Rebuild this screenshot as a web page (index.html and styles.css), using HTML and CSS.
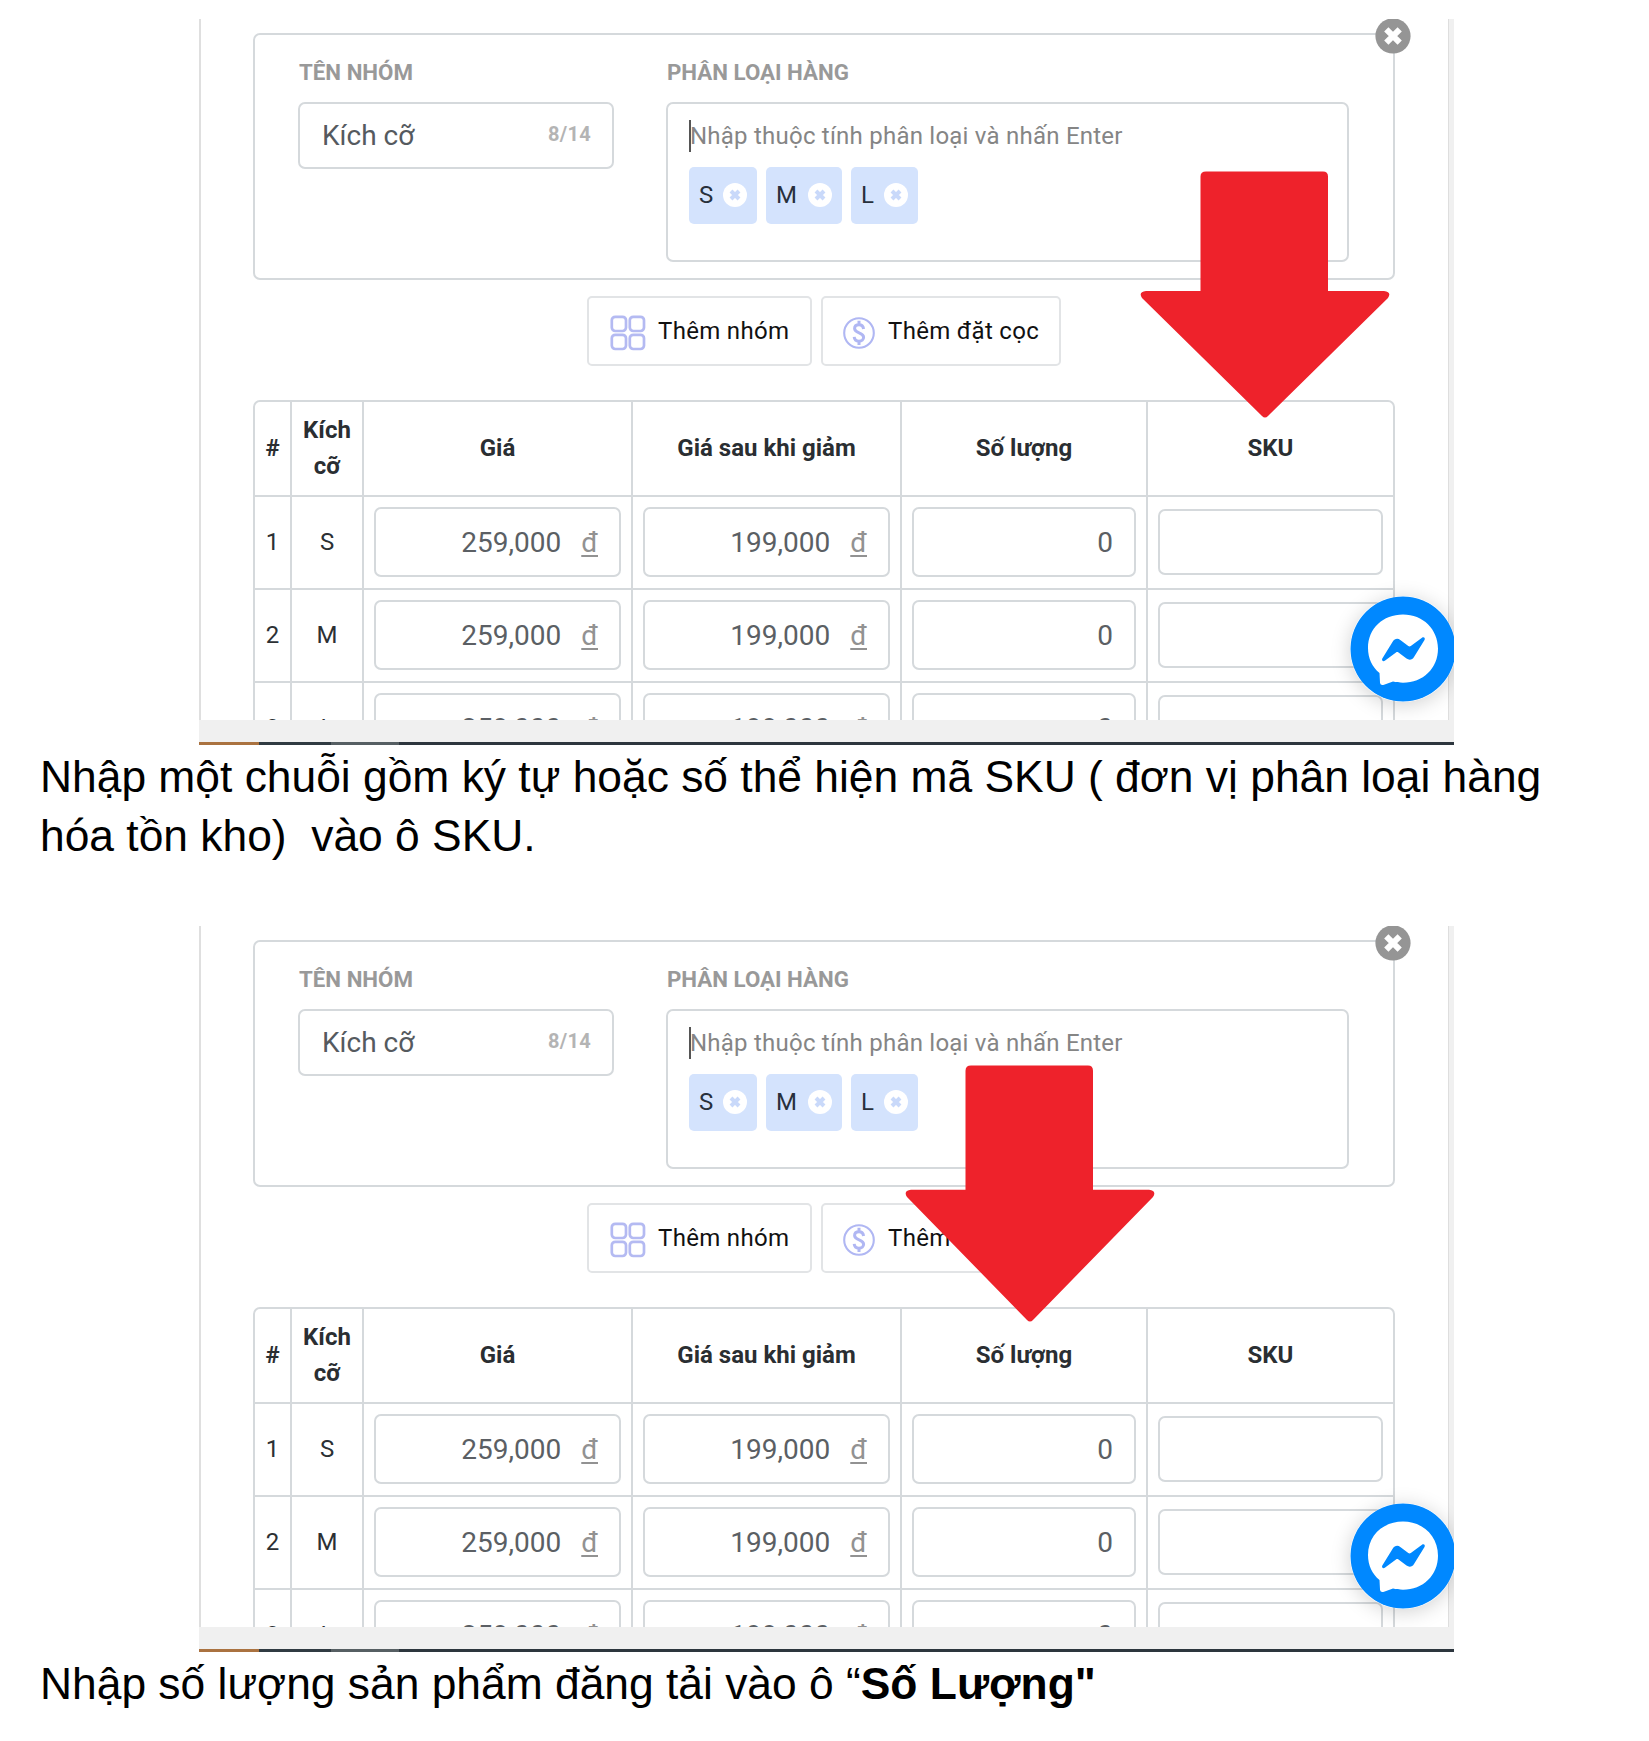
FILE: index.html
```html
<!DOCTYPE html>
<html lang="vi">
<head>
<meta charset="utf-8">
<title>Hướng dẫn đăng tải sản phẩm</title>
<link rel="stylesheet" href="styles.css">
</head>
<body>
<svg class="defs" width="0" height="0">
  <symbol id="cross" viewBox="0 0 36 36"><circle cx="18" cy="18" r="17.6" fill="currentColor"/><path class="cross-mark" d="M11.3 11.3 24.7 24.7M24.7 11.3 11.3 24.700"/></symbol>
  <symbol id="grid" viewBox="0 0 36 36"><g fill="none" stroke="#b4baf2" stroke-width="2.700"><rect x="1.800" y="1.800" width="14.200" height="14.200" rx="3.500"/><rect x="19.800" y="1.800" width="14.200" height="14.200" rx="3.500"/><rect x="1.800" y="19.800" width="14.200" height="14.200" rx="3.500"/><rect x="19.800" y="19.800" width="14.200" height="14.200" rx="3.500"/></g></symbol>
  <symbol id="coin" viewBox="0 0 32 32"><g fill="none" stroke="#b0b7f3"><circle cx="16" cy="16" r="14.800" stroke-width="2.100"/><path stroke-width="3" d="M20.600 12C20.200 9.400 18.400 7.800 16 7.800c-2.600 0-4.400 1.500-4.400 3.800 0 5.200 9 3.400 9 8.600 0 2.400-1.900 4-4.600 4-2.700 0-4.600-1.600-4.800-4.300M16 3.800v4M16 24v4"/></g></symbol>
  <symbol id="messenger" viewBox="0 0 106 106"><circle cx="53" cy="53" r="52.500" fill="#0088ff"/><path fill="#fff" d="M53 18.500C33 18.500 18 32.500 18 52c0 10.500 4.300 19 11.500 25l.5 9.500c.2 2.300 2 3 4 2.200l9-3.200c3 .8 6.500 1.200 10 1.200 20 0 35-14.500 35-34S73 18.500 53 18.500z"/><path fill="#0088ff" d="m32.300 62.500 10.500-17c1.800-2.900 5-3.400 7.500-1.500l8 6c.8.6 1.700.6 2.500 0l11.200-8.200c1.800-1.300 3.600.4 2.500 2.200L64 61c-1.600 2.900-5 3.400-7.500 1.500l-8-6c-.8-.6-1.700-.6-2.500 0L34.800 64.800c-1.800 1.200-3.500-.5-2.500-2.300z"/></symbol>
  <symbol id="arrow" viewBox="0 0 250 248" preserveAspectRatio="none"><path fill="#ee222b" d="M66 .5H183q5 0 5 5V120h56q8 1 4 7L128 245q-3 3-6 0L2 127q-4-6 4-7H60.500V5.500q0-5 5.500-5z"/></symbol>
</svg>
<main class="doc">
  <section class="shot">
    <div class="screen">
      <div class="group">
        <svg class="group-close"><use href="#cross"/></svg>
        <div class="field">
          <h4><span>TÊN NHÓM</span></h4>
          <div class="name-input"><span class="name-value">Kích cỡ</span><span class="count">8/14</span></div>
        </div>
        <div class="field wide">
          <h4><span>PHÂN LOẠI HÀNG</span></h4>
          <div class="options">
            <p class="placeholder">Nhập thuộc tính phân loại và nhấn Enter</p>
            <div class="tags">
              <span class="tag s">S<svg viewBox="0 0 24 24"><circle cx="12" cy="12" r="12"/><path d="M8 8 16 16M16 8 8 16"/></svg></span>
              <span class="tag m">M<svg viewBox="0 0 24 24"><circle cx="12" cy="12" r="12"/><path d="M8 8 16 16M16 8 8 16"/></svg></span>
              <span class="tag l">L<svg viewBox="0 0 24 24"><circle cx="12" cy="12" r="12"/><path d="M8 8 16 16M16 8 8 16"/></svg></span>
            </div>
          </div>
        </div>
      </div>
      <div class="actions">
        <div class="btn one"><svg class="ic-grid"><use href="#grid"/></svg><span>Thêm nhóm</span></div>
        <div class="btn two"><svg class="ic-coin"><use href="#coin"/></svg><span>Thêm đặt cọc</span></div>
      </div>
      <div class="table">
        <div class="row head"><b>#</b><b>Kích<br>cỡ</b><b>Giá</b><b>Giá sau khi giảm</b><b>Số lượng</b><b>SKU</b></div>
        <div class="row"><i>1</i><i>S</i><div class="cell"><p>259,000<u>đ</u></p></div><div class="cell"><p>199,000<u>đ</u></p></div><div class="cell"><p>0</p></div><div class="cell sku"><p></p></div></div>
        <div class="row"><i>2</i><i>M</i><div class="cell"><p>259,000<u>đ</u></p></div><div class="cell"><p>199,000<u>đ</u></p></div><div class="cell"><p>0</p></div><div class="cell sku"><p></p></div></div>
        <div class="row"><i>3</i><i>L</i><div class="cell"><p>259,000<u>đ</u></p></div><div class="cell"><p>199,000<u>đ</u></p></div><div class="cell"><p>0</p></div><div class="cell sku"><p></p></div></div>
      </div>
      <svg class="chat"><use href="#messenger"/></svg>
    </div>
    <div class="footer"></div>
    <svg class="arrow at-sku"><use href="#arrow"/></svg>
  </section>
  <p class="caption">Nhập một chuỗi gồm ký tự hoặc số thể hiện mã SKU ( đơn vị phân loại hàng<br>hóa tồn kho)&nbsp; vào ô SKU.</p>
  <section class="shot">
    <div class="screen">
      <div class="group">
        <svg class="group-close"><use href="#cross"/></svg>
        <div class="field">
          <h4><span>TÊN NHÓM</span></h4>
          <div class="name-input"><span class="name-value">Kích cỡ</span><span class="count">8/14</span></div>
        </div>
        <div class="field wide">
          <h4><span>PHÂN LOẠI HÀNG</span></h4>
          <div class="options">
            <p class="placeholder">Nhập thuộc tính phân loại và nhấn Enter</p>
            <div class="tags">
              <span class="tag s">S<svg viewBox="0 0 24 24"><circle cx="12" cy="12" r="12"/><path d="M8 8 16 16M16 8 8 16"/></svg></span>
              <span class="tag m">M<svg viewBox="0 0 24 24"><circle cx="12" cy="12" r="12"/><path d="M8 8 16 16M16 8 8 16"/></svg></span>
              <span class="tag l">L<svg viewBox="0 0 24 24"><circle cx="12" cy="12" r="12"/><path d="M8 8 16 16M16 8 8 16"/></svg></span>
            </div>
          </div>
        </div>
      </div>
      <div class="actions">
        <div class="btn one"><svg class="ic-grid"><use href="#grid"/></svg><span>Thêm nhóm</span></div>
        <div class="btn two"><svg class="ic-coin"><use href="#coin"/></svg><span>Thêm</span></div>
      </div>
      <div class="table">
        <div class="row head"><b>#</b><b>Kích<br>cỡ</b><b>Giá</b><b>Giá sau khi giảm</b><b>Số lượng</b><b>SKU</b></div>
        <div class="row"><i>1</i><i>S</i><div class="cell"><p>259,000<u>đ</u></p></div><div class="cell"><p>199,000<u>đ</u></p></div><div class="cell"><p>0</p></div><div class="cell sku"><p></p></div></div>
        <div class="row"><i>2</i><i>M</i><div class="cell"><p>259,000<u>đ</u></p></div><div class="cell"><p>199,000<u>đ</u></p></div><div class="cell"><p>0</p></div><div class="cell sku"><p></p></div></div>
        <div class="row"><i>3</i><i>L</i><div class="cell"><p>259,000<u>đ</u></p></div><div class="cell"><p>199,000<u>đ</u></p></div><div class="cell"><p>0</p></div><div class="cell sku"><p></p></div></div>
      </div>
      <svg class="chat"><use href="#messenger"/></svg>
    </div>
    <div class="footer"></div>
    <svg class="arrow at-qty"><use href="#arrow"/></svg>
  </section>
  <p class="caption">Nhập số lượng sản phẩm đăng tải vào ô “<strong>Số Lượng"</strong></p>
</main>
</body>
</html>
```
FILE: styles.css
```css
* { box-sizing: border-box; }
body { margin: 0; background: #fff; font-family: Roboto, "Liberation Sans", sans-serif; }
p, h4 { margin: 0; }
.defs { position: absolute; }
.doc { height: 1741px; padding-top: 19px; overflow: hidden; }

.shot { position: relative; width: 1255px; height: 726px; margin-left: 199px; }
.screen { position: relative; height: 701px; overflow: hidden; border-left: 2px solid #dfdfdf; padding: 14px 0 0 52px; background: linear-gradient(90deg, #dedede 1px, #f0f0f0 1px) right top / 6px 100% no-repeat; }
.footer { height: 25px; background: linear-gradient(90deg, #aa7240 60px, #303b42 60px 132px, #565f63 132px 200px, #2d363e 200px) bottom / 100% 3px no-repeat #f0f0f0; }

.group { position: relative; width: 1142px; height: 247px; border: 2px solid #d5d9dc; border-radius: 7px; padding: 24px 0 0 43px; display: flex; gap: 52px; }
.group-close { position: absolute; right: -18px; top: -17px; width: 36px; height: 36px; color: #959595; }
.cross-mark { fill: none; stroke: #fff; stroke-width: 6; }
.field { width: 316px; }
.wide { width: 683px; }
h4 { height: 43px; padding-left: 1px; line-height: 26px; font-size: 22.3px; font-weight: 700; color: #999; white-space: nowrap; }
.name-input, .options { border: 2px solid #d5d9dc; border-radius: 7px; }
.name-input { height: 67px; display: flex; justify-content: space-between; padding: 0 21px 0 22px; line-height: 64px; font-size: 28px; color: #555a5f; }
.count { font-size: 20px; font-weight: 700; color: #b4b4b4; line-height: 60px; letter-spacing: .3px; }
.options { height: 160px; padding: 16px 0 0 21px; }
.placeholder { height: 32px; line-height: 32px; border-left: 2px solid #555; font-size: 24px; color: #858585; white-space: nowrap; letter-spacing: .23px; text-indent: -1px; }
.tags { display: flex; margin-top: 15px; gap: 9px; }
.tag { height: 57px; border-radius: 5px; background: #d4e3fd; display: flex; align-items: center; justify-content: space-between; padding: 0 10px 2px; font-size: 24px; color: #28303c; }
.tag svg { width: 24px; height: 24px; fill: #fff; }
.tag path { stroke: #c9d9fa; stroke-width: 4; }
.s { width: 68px; }
.m { width: 76px; }
.l { width: 67px; }

.actions { display: flex; gap: 9px; margin: 16px 0 0 334px; }
.btn { height: 70px; border: 2px solid #e2e4e6; border-radius: 5px; display: flex; align-items: center; font-size: 24px; color: #111; white-space: nowrap; letter-spacing: .32px; }
.one { width: 225px; padding-left: 21px; }
.two { width: 240px; padding-left: 20px; }
.ic-grid { width: 36px; height: 36px; margin-right: 12px; margin-top: 3px; }
.ic-coin { width: 32px; height: 32px; margin-right: 13px; margin-top: 3px; }

.table { margin-top: 34px; width: 1142px; height: 400px; border: 2px solid #d5d9dc; border-radius: 7px; }
.row { display: grid; grid-template-columns: 37px 72px 269px 269px 246px 245px; height: 93px; border-bottom: 2px solid #d5d9dc; }
.head { height: 95px; }
.row > * { border-right: 2px solid #d5d9dc; display: flex; align-items: center; justify-content: center; text-align: center; font-size: 24px; line-height: 36px; font-style: normal; color: #2c3034; padding-bottom: 2px; }
.row > :last-child { border-right: 0; }
.row > b { font-weight: 700; color: #2a2e32; }
.row > .cell { align-items: flex-start; justify-content: stretch; padding: 10px 10px 0; }
.cell p { flex: 1; height: 70px; border: 2px solid #d5d9dc; border-radius: 7px; display: flex; justify-content: flex-end; line-height: 68px; font-size: 28px; color: #5b5f64; padding-right: 21px; }
.cell u { margin-left: 20px; color: #929292; text-decoration-thickness: 2px; text-underline-offset: 3px; }
.sku p { height: 66px; margin-top: 2px; }

.chat { position: absolute; left: 1149px; top: 577px; width: 106px; height: 106px; border-radius: 50%; box-shadow: 0 3px 20px rgba(0,0,0,.18); }
.arrow { position: absolute; width: 250px; height: 248px; }
.at-sku { left: 941px; top: 152px; }
.at-qty { left: 706px; top: 139px; height: 258px; }

.caption { height: 181px; padding: 3px 0 0 40px; font-family: "Liberation Sans", Arial, sans-serif; font-size: 44.37px; line-height: 58.5px; color: #000; white-space: nowrap; }
```
